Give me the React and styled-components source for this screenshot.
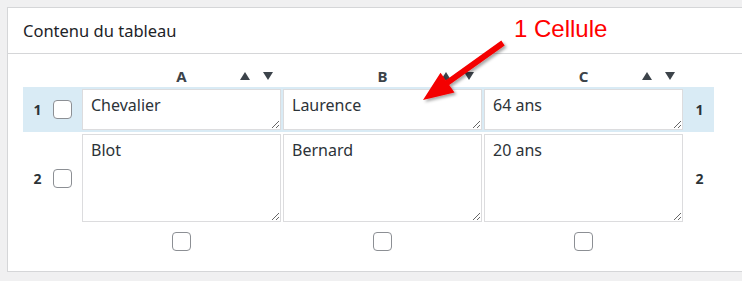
import styled, { createGlobalStyle } from 'styled-components'

const GlobalStyle = createGlobalStyle`
  html, body {
    margin: 0;
    background: #f0f0f1;
    overflow: hidden;
    font-family: "Noto Sans", "Open Sans", sans-serif;
    color: #1d2327;
  }
`

const Page = styled.div`
  position: relative;
  padding: 7px 0 0 7px;
  height: 274px;
`

const Panel = styled.section`
  width: 760px;
  background: #fff;
  border: 1px solid #d5d6d8;
`

const PanelHeader = styled.header`
  height: 45px;
  display: flex;
  align-items: center;
  padding: 0 15px;
  border-bottom: 1px solid #d5d6d8;
  font-size: 16.5px;
  color: #1d2327;
`

const PanelBody = styled.div`
  padding: 11px 0 20px 15px;
`

const Row = styled.div`
  display: grid;
  grid-template-columns: 28px 31px repeat(3, 201px) 29px;
  width: 691px;
  align-items: center;
  padding: ${(p) => (p.$pad ? '2px 0' : '0')};
  background: ${(p) => (p.$active ? '#d9ebf5' : 'transparent')};
`

const HeadRow = styled(Row)`
  height: 22px;
`

const FootRow = styled(Row)`
  padding-top: 8px;
`

const ColHead = styled.div`
  position: relative;
  display: flex;
  justify-content: center;
  align-items: center;
  width: 199px;
  font-size: 15px;
  font-weight: 700;
  color: #3c434a;
`

const Sorters = styled.div`
  position: absolute;
  right: 8px;
  top: 50%;
  transform: translateY(-50%);
  display: flex;
  gap: 13px;
`

const RowNum = styled.div`
  text-align: center;
  font-size: 14px;
  font-weight: 700;
  color: #2c3338;
  padding-left: ${(p) => (p.$right ? '0' : '1px')};
`

const CheckCell = styled.div`
  display: flex;
  justify-content: ${(p) => (p.$center ? 'center' : 'flex-start')};
  width: ${(p) => (p.$center ? '199px' : 'auto')};
  padding-left: ${(p) => (p.$center ? '0' : '2px')};
`

const Check = styled.input.attrs({ type: 'checkbox' })`
  appearance: none;
  margin: 0;
  width: 19px;
  height: 19px;
  border: 1px solid #8c8f94;
  border-radius: 4px;
  background: #fff;
  box-sizing: border-box;
`

const Cell = styled.textarea`
  box-sizing: border-box;
  width: 199px;
  height: ${(p) => p.$h}px;
  margin: 0;
  padding: 4px 8px;
  border: 1px solid #dcdcde;
  border-radius: 0;
  background: #fff;
  font-family: "Noto Sans", "Open Sans", sans-serif;
  font-size: 16px;
  line-height: 22px;
  color: #2c3338;
  resize: both;
  outline: none;
  display: block;
`

const Callout = styled.div`
  position: absolute;
  left: 514px;
  top: 15px;
  font-family: "Liberation Sans", Arial, sans-serif;
  font-size: 24px;
  color: #ff0000;
  white-space: nowrap;
`

const Pointer = styled.svg`
  position: absolute;
  left: 0;
  top: 0;
  pointer-events: none;
`

const Tri = ({ up }) => (
  <svg width="10" height="8" viewBox="0 0 10 8">
    <polygon points={up ? '5,0 10,8 0,8' : '0,0 10,0 5,8'} fill="#3c434a" />
  </svg>
)

const rows = [
  { n: 1, h: 41, active: true, cells: ['Chevalier', 'Laurence', '64 ans'] },
  { n: 2, h: 88, active: false, cells: ['Blot', 'Bernard', '20 ans'] },
]

const cols = ['A', 'B', 'C']

export default function App() {
  return (
    <Page>
      <GlobalStyle />
      <Panel>
        <PanelHeader>Contenu du tableau</PanelHeader>
        <PanelBody>
          <HeadRow>
            <span />
            <span />
            {cols.map((c) => (
              <ColHead key={c}>
                {c}
                <Sorters>
                  <Tri up />
                  <Tri />
                </Sorters>
              </ColHead>
            ))}
            <span />
          </HeadRow>
          {rows.map((r) => (
            <Row key={r.n} $pad $active={r.active}>
              <RowNum>{r.n}</RowNum>
              <CheckCell>
                <Check />
              </CheckCell>
              {r.cells.map((v, i) => (
                <div key={i}>
                  <Cell $h={r.h} defaultValue={v} />
                </div>
              ))}
              <RowNum $right>{r.n}</RowNum>
            </Row>
          ))}
          <FootRow>
            <span />
            <span />
            {cols.map((c) => (
              <CheckCell key={c} $center>
                <Check />
              </CheckCell>
            ))}
            <span />
          </FootRow>
        </PanelBody>
      </Panel>
      <Callout>1 Cellule</Callout>
      <Pointer width="742" height="281" viewBox="0 0 742 281">
        <defs>
          <filter id="sh" x="-20%" y="-20%" width="140%" height="140%">
            <feDropShadow dx="2" dy="2" stdDeviation="1.6" floodColor="#000" floodOpacity="0.35" />
          </filter>
        </defs>
        <polygon
          points="423,100 440.5,72.8 445.8,80.2 501.3,40.6 504.7,45.4 449.2,85 454.5,92.4"
          fill="#f40000"
          filter="url(#sh)"
        />
      </Pointer>
    </Page>
  )
}
